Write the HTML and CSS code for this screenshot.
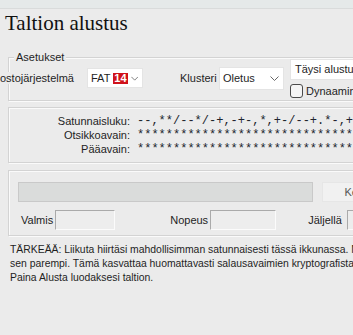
FILE: index.html
```html
<!DOCTYPE html>
<html lang="fi">
<head>
  <meta charset="UTF-8" />
  <meta name="viewport" content="width=device-width, initial-scale=1" />
  <title>Taltion alustus</title>
  <link rel="stylesheet" href="styles.css">
</head>
<body>
  <div class="window">
    <div class="topbar"></div>
    <h1 class="title">Taltion alustus</h1>

    <div class="group settings">
      <span class="group-title">Asetukset</span>
      <div class="settings-row">
        <span class="fs-label">ostojärjestelmä</span>
        <div class="select fs-select">
          <span>FAT</span><span class="tag">14</span>
          <svg class="chevron" width="9" height="5" viewBox="0 0 9 5"><path d="M0.5 0.5 L4.5 4.5 L8.5 0.5" fill="none" stroke="#666" stroke-width="1"/></svg>
        </div>
        <span class="cluster-label">Klusteri</span>
        <div class="select cluster-select">
          <span>Oletus</span>
          <svg class="chevron" width="9" height="5" viewBox="0 0 9 5"><path d="M0.5 0.5 L4.5 4.5 L8.5 0.5" fill="none" stroke="#666" stroke-width="1"/></svg>
        </div>
        <div class="format-col">
          <div class="format-box">Täysi alustus</div>
          <label class="check"><span class="check-box"></span>Dynaaminen</label>
        </div>
      </div>
    </div>

    <div class="group keys">
      <span class="key-label">Satunnaisluku:</span>
      <span class="key-value">--,**/--*/-+,-+-,*,+-/--+.*-,+-*/,+</span>
      <span class="key-label">Otsikkoavain:</span>
      <span class="key-value">****************************************</span>
      <span class="key-label">Pääavain:</span>
      <span class="key-value">****************************************</span>
    </div>

    <div class="group progress">
      <div class="progress-row">
        <div class="progress-bar"></div>
        <button class="abort-btn">Keskeytä</button>
      </div>
      <div class="stats-row">
        <div class="stat"><span>Valmis</span><div class="stat-field"></div></div>
        <div class="stat speed"><span>Nopeus</span><div class="stat-field wide"></div></div>
        <div class="stat left"><span>Jäljellä</span><div class="stat-field"></div></div>
      </div>
    </div>

    <p class="note">TÄRKEÄÄ: Liikuta hiirtäsi mahdollisimman satunnaisesti tässä ikkunassa. Mitä kauemmin, sitä<br>sen parempi. Tämä kasvattaa huomattavasti salausavaimien kryptografista vahvuutta.<br>Paina Alusta luodaksesi taltion.</p>
  </div>
</body>
</html>
```

FILE: styles.css
```css
html, body {
  margin: 0;
  padding: 0;
  height: 100%;
  background: #ebebeb;
  overflow: hidden;
  font-family: "Liberation Sans", Arial, sans-serif;
  font-size: 11px;
  color: #1e1e1e;
}
.window {
  width: 440px;
}
.topbar {
  height: 8px;
  background: #e5e9e9;
  border-bottom: 1px solid #d9dbdb;
}
.title {
  margin: 2px 0 0;
  padding-left: 5px;
  font-family: "Liberation Serif", "Times New Roman", serif;
  font-weight: normal;
  font-size: 21px;
  line-height: 24px;
  color: #111;
}
.group {
  position: relative;
  margin: 0 8px;
  border: 1px solid #d3d3d3;
  box-shadow: inset 1px 1px #fafafa, 1px 1px #fafafa;
}
.group-title {
  position: absolute;
  top: -7px;
  left: 5px;
  padding: 0 2px;
  line-height: 13px;
  background: #ebebeb;
}
.settings {
  margin-top: 22px;
  padding: 1px 0 3px;
}
.settings-row {
  display: flex;
  align-items: center;
  height: 38px;
}
.fs-label {
  width: 82px;
  margin-left: -9px;
  white-space: nowrap;
  background: #ebebeb;
}
.select {
  display: flex;
  align-items: center;
  box-sizing: border-box;
  background: #fff;
  border: 1px solid #e4e4e4;
  padding-left: 3px;
  white-space: nowrap;
}
.fs-select {
  margin-left: 5px;
  width: 56px;
  height: 20px;
  gap: 3px;
}
.tag {
  background: #d0121b;
  color: #fff;
  font-weight: bold;
  line-height: 11px;
  padding: 0 1px;
}
.chevron {
  margin-left: auto;
  margin-right: 4px;
}
.cluster-label {
  margin-left: 37px;
  width: 37px;
}
.cluster-select {
  margin-left: 2px;
  width: 65px;
  height: 23px;
}
.format-col {
  display: flex;
  flex-direction: column;
  gap: 4px;
  margin-left: 6px;
}
.format-box {
  width: 100px;
  height: 21px;
  box-sizing: border-box;
  background: #fff;
  border: 1px solid #e4e4e4;
  padding: 3px 0 0 4px;
  white-space: nowrap;
}
.check {
  display: flex;
  align-items: center;
  gap: 3px;
  height: 13px;
  white-space: nowrap;
}
.check-box {
  width: 11px;
  height: 12px;
  border: 1px solid #4a4a4a;
  border-radius: 3px;
  background: #f4f4f4;
}
.keys {
  margin-top: 6px;
  padding: 6px 0;
  display: grid;
  grid-template-columns: 121px 1fr;
  column-gap: 7px;
  line-height: 14px;
  overflow: hidden;
}
.key-label {
  text-align: right;
}
.key-value {
  font-family: "Liberation Mono", "Courier New", monospace;
  font-size: 12px;
  color: #20242c;
  white-space: nowrap;
}
.progress {
  margin-top: 7px;
  padding: 11px 0 5px 9px;
}
.progress-row {
  display: flex;
  gap: 9px;
  height: 20px;
}
.progress-bar {
  width: 295px;
  box-sizing: border-box;
  background: #dadcdb;
  border: 1px solid #c9c9c9;
}
.abort-btn {
  width: 90px;
  height: 20px;
  border: 1px solid #e6e6e6;
  background: #f1f1f1;
  font: inherit;
  color: #555;
  padding: 0;
}
.stats-row {
  display: flex;
  align-items: center;
  margin-top: 8px;
  margin-left: 3px;
  height: 20px;
}
.stat {
  display: flex;
  align-items: center;
  gap: 2px;
}
.speed {
  margin-left: 55px;
}
.left {
  margin-left: 32px;
}
.left .stat-field {
  margin-left: 3px;
}
.stat-field {
  width: 58px;
  height: 18px;
  background: #ededed;
  border: 1px solid #fbfbfb;
  border-top-color: #aaa;
  border-left-color: #aaa;
}
.stat-field.wide {
  width: 64px;
}
.note {
  margin: 7px 0 0;
  padding-left: 10px;
  font-size: 10.4px;
  line-height: 14px;
  white-space: nowrap;
}
```
